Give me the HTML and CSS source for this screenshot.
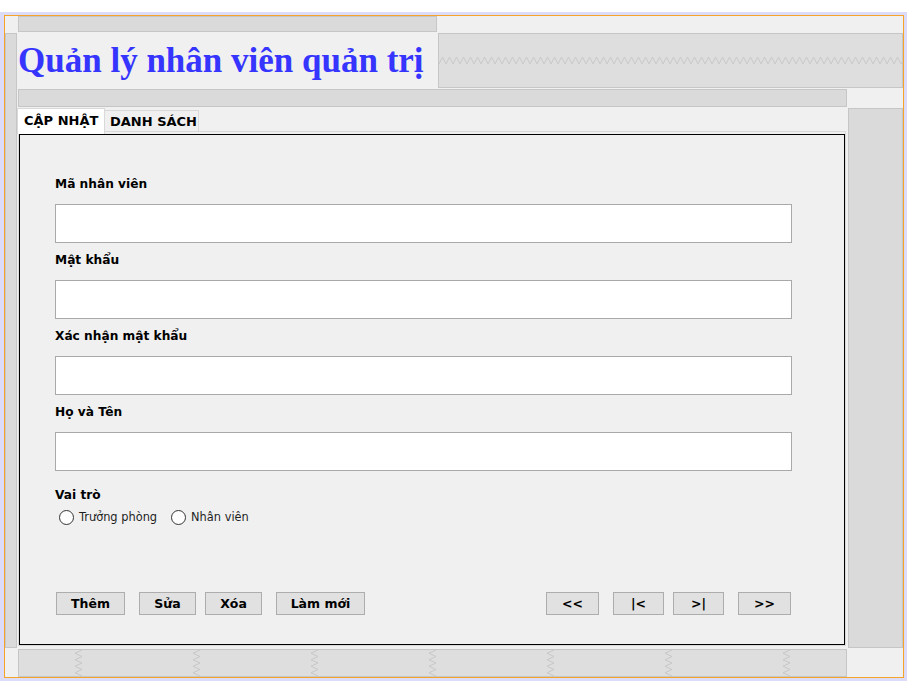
FILE: index.html
```html
<!DOCTYPE html>
<html lang="vi">
<head>
<meta charset="utf-8">
<title>Quản lý nhân viên quản trị</title>
<link rel="stylesheet" href="styles.css">
</head>
<body>
<div class="screen">
  <div class="frame">
    <div class="layout">
      <div class="strip top-strip"></div>
      <div class="strip left-strip"></div>
      <h1 class="title">Quản lý nhân viên quản trị</h1>
      <div class="zig-box zig-top">
        <svg class="zig-h" width="100%" height="9">
          <defs>
            <pattern id="zz" width="7" height="9" patternUnits="userSpaceOnUse">
              <polyline points="0,8 3.5,1 7,8" fill="none" stroke="#c8c8c8" stroke-width="1"/>
            </pattern>
          </defs>
          <rect width="100%" height="9" fill="url(#zz)"/>
        </svg>
      </div>
      <div class="strip bar"></div>
      <div class="tabbed">
        <div class="tabs">
          <div class="tab tab-active">CẬP NHẬT</div>
          <div class="tab tab-normal">DANH SÁCH</div>
        </div>
        <div class="tab-panel">
          <div class="card">
            <div class="label">Mã nhân viên</div>
            <input class="field" type="text">
            <div class="label">Mật khẩu</div>
            <input class="field" type="password">
            <div class="label">Xác nhận mật khẩu</div>
            <input class="field" type="password">
            <div class="label">Họ và Tên</div>
            <input class="field" type="text">
            <div class="role-label">Vai trò</div>
            <div class="radios">
              <div class="radio"><span class="radio-dot"></span><span>Trưởng phòng</span></div>
              <div class="radio"><span class="radio-dot"></span><span>Nhân viên</span></div>
            </div>
            <div class="actions">
              <div class="group">
                <button class="btn btn-add">Thêm</button>
                <button class="btn btn-edit">Sửa</button>
                <button class="btn btn-del tight">Xóa</button>
                <button class="btn btn-new">Làm mới</button>
              </div>
              <div class="group">
                <button class="btn btn-first">&lt;&lt;</button>
                <button class="btn btn-prev">|&lt;</button>
                <button class="btn btn-next tight">&gt;|</button>
                <button class="btn btn-last">&gt;&gt;</button>
              </div>
            </div>
          </div>
        </div>
      </div>
      <div class="strip east"></div>
      <div class="zig-box zig-bottom">
        <svg class="zig-v" width="9" height="26"><polyline points="8,0 1,3.25 8,6.5 1,9.75 8,13 1,16.25 8,19.5 1,22.75 8,26" fill="none" stroke="#c8c8c8" stroke-width="1"/></svg>
        <svg class="zig-v" width="9" height="26"><polyline points="8,0 1,3.25 8,6.5 1,9.75 8,13 1,16.25 8,19.5 1,22.75 8,26" fill="none" stroke="#c8c8c8" stroke-width="1"/></svg>
        <svg class="zig-v" width="9" height="26"><polyline points="8,0 1,3.25 8,6.5 1,9.75 8,13 1,16.25 8,19.5 1,22.75 8,26" fill="none" stroke="#c8c8c8" stroke-width="1"/></svg>
        <svg class="zig-v" width="9" height="26"><polyline points="8,0 1,3.25 8,6.5 1,9.75 8,13 1,16.25 8,19.5 1,22.75 8,26" fill="none" stroke="#c8c8c8" stroke-width="1"/></svg>
        <svg class="zig-v" width="9" height="26"><polyline points="8,0 1,3.25 8,6.5 1,9.75 8,13 1,16.25 8,19.5 1,22.75 8,26" fill="none" stroke="#c8c8c8" stroke-width="1"/></svg>
        <svg class="zig-v" width="9" height="26"><polyline points="8,0 1,3.25 8,6.5 1,9.75 8,13 1,16.25 8,19.5 1,22.75 8,26" fill="none" stroke="#c8c8c8" stroke-width="1"/></svg>
        <svg class="zig-v" width="9" height="26"><polyline points="8,0 1,3.25 8,6.5 1,9.75 8,13 1,16.25 8,19.5 1,22.75 8,26" fill="none" stroke="#c8c8c8" stroke-width="1"/></svg>
      </div>
    </div>
  </div>
</div>
</body>
</html>
```
FILE: styles.css
```css
html, body {
  margin: 0;
  padding: 0;
  background: #ffffff;
  font-family: "DejaVu Sans", sans-serif;
}

.screen {
  margin-top: 12px;
  width: 900px;
  height: 663px;
  border: 3px solid #dcdcf8;
  border-left-width: 4px;
}

.frame {
  box-sizing: border-box;
  height: 100%;
  border: 1px solid #f5a42a;
  background: #f0f0f0;
}

.layout {
  display: grid;
  grid-template-columns: 12px 419px 409px 55px;
  grid-template-rows: 16px 55px 18px 540px 28px;
  gap: 1px;
}

.strip {
  box-sizing: border-box;
  background: #dadada;
  border: 1px solid #c6c6c6;
}

.top-strip { grid-column: 2; grid-row: 1; }
.left-strip { grid-column: 1; grid-row: 2 / 5; }
.bar { grid-column: 2 / 4; grid-row: 3; }
.east { grid-column: 4; grid-row: 4; }

.title {
  grid-column: 2;
  grid-row: 2;
  margin: 0;
  font: bold 35px/55px "Liberation Serif", serif;
  color: #3535ff;
  white-space: nowrap;
}

.zig-box {
  box-sizing: border-box;
  background: #dedede;
  border: 1px solid #c6c6c6;
}

.zig-top {
  grid-column: 3 / 5;
  grid-row: 2;
  display: flex;
  align-items: center;
}

.zig-h { display: block; }

.zig-bottom {
  grid-column: 2 / 4;
  grid-row: 5;
  display: grid;
  grid-template-columns: repeat(7, 1fr);
  justify-items: center;
  align-items: center;
}

.zig-v { display: block; }

.tabbed {
  grid-column: 2 / 4;
  grid-row: 4;
  display: flex;
  flex-direction: column;
}

.tabs {
  flex: none;
  height: 23px;
  display: flex;
  align-items: flex-end;
}

.tab {
  box-sizing: border-box;
  border: 1px solid #d9d9d9;
  border-bottom: none;
  font: bold 13px/20px "DejaVu Sans", sans-serif;
  color: #000;
  white-space: nowrap;
}

.tab-active {
  width: 88px;
  height: 26px;
  margin-left: -1px;
  margin-bottom: -3px;
  padding: 2px 0 0 6px;
  background: #ffffff;
  position: relative;
  z-index: 1;
}

.tab-normal {
  width: 95px;
  height: 21px;
  margin-left: -1px;
  padding: 1px 0 0 5px;
  background: #f0f0f0;
}

.tab-panel {
  flex: 1;
  box-sizing: border-box;
  margin-right: 1px;
  margin-bottom: 2px;
  border: 1px solid #d9d9d9;
  padding-top: 2px;
  display: flex;
}

.card {
  flex: 1;
  border: 1px solid #000;
  padding: 32px 52px 29px 35px;
  display: flex;
  flex-direction: column;
}

.label {
  font: bold 12.2px/34px "DejaVu Sans", sans-serif;
  padding-bottom: 3px;
  color: #000;
}

.field {
  display: block;
  width: 737px;
  height: 39px;
  margin: 0;
  box-sizing: border-box;
  border: 1px solid #a9a9a9;
  border-radius: 0;
  background: #fff;
  padding: 0 4px;
  outline: none;
}

.role-label {
  margin-top: 16px;
  font: bold 12.2px/16px "DejaVu Sans", sans-serif;
  color: #000;
}

.radios {
  display: flex;
  align-items: center;
  gap: 14px;
  margin-top: 7px;
  margin-left: 4px;
  height: 15px;
}

.radio {
  display: flex;
  align-items: center;
  gap: 5px;
  font: 11.4px/15px "DejaVu Sans", sans-serif;
  color: #1e1e1e;
}

.radio-dot {
  box-sizing: border-box;
  width: 15px;
  height: 15px;
  border: 1px solid #333;
  border-radius: 50%;
  background: #fff;
}

.actions {
  margin-top: auto;
  margin-left: 1px;
  margin-right: 1px;
  display: flex;
  justify-content: space-between;
}

.group {
  display: flex;
  gap: 14px;
}

.btn {
  box-sizing: border-box;
  height: 23px;
  margin: 0;
  padding: 0;
  border: 1px solid #adadad;
  border-radius: 0;
  background: #e1e1e1;
  font: bold 12.5px/21px "DejaVu Sans", sans-serif;
  color: #000;
  text-align: center;
  white-space: nowrap;
}

.tight { margin-left: -5px; }

.btn-add { width: 69px; }
.btn-edit { width: 57px; }
.btn-del { width: 57px; }
.btn-new { width: 89px; }
.btn-first { width: 53px; }
.btn-prev { width: 51px; }
.btn-next { width: 51px; }
.btn-last { width: 53px; }
```
